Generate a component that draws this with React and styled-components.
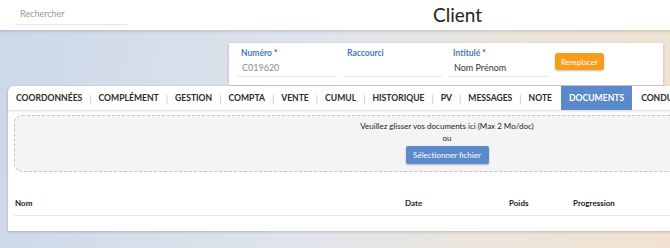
import React from 'react';
import styled, {createGlobalStyle} from 'styled-components';

const GlobalStyle = createGlobalStyle`
  html, body {
    margin: 0;
    padding: 0;
    overflow: hidden;
  }
  body {
    font-family: Lato, "Open Sans", sans-serif;
    background: linear-gradient(100deg, #cbd8e8 0%, #dfe4ec 45%, #ece5dc 75%, #f0e2cf 100%);
    min-height: 248px;
  }
`;

const tabs = ['Coordonnées', 'Complément', 'Gestion', 'Compta', 'Vente', 'Cumul', 'Historique', 'PV', 'Messages', 'Note', 'Documents', 'Conducteurs'];

const App = () => {
  return (
    <Page>
      <GlobalStyle />
      <TopBar>
        <Search placeholder="Rechercher" />
        <Title>Client</Title>
      </TopBar>

      <IdentityRow>
        <IdentityCard>
          <Field>
            <Label>Numéro <Star>*</Star></Label>
            <Value $muted>C019620</Value>
          </Field>
          <Field>
            <Label>Raccourci</Label>
            <Value></Value>
          </Field>
          <Field>
            <Label>Intitulé <Star>*</Star></Label>
            <Value>Nom Prénom</Value>
          </Field>
          <OrangeButton>Remplacer</OrangeButton>
        </IdentityCard>
      </IdentityRow>

      <Panel>
        <TabBar>
          {tabs.map((t, i) => (
            <React.Fragment key={t}>
              {/* no separator around the active tab */}
              {i > 0 && t !== 'Documents' && tabs[i - 1] !== 'Documents' && <Sep>|</Sep>}
              <Tab $active={t === 'Documents'}>{t}</Tab>
            </React.Fragment>
          ))}
        </TabBar>
        <Content>
          <DropZone>
            <DropText>Veuillez glisser vos documents ici (Max 2 Mo/doc)</DropText>
            <DropText>ou</DropText>
            <BlueButton>Sélectionner fichier</BlueButton>
          </DropZone>
          <TableHead>
            <Col $w="390px">Nom</Col>
            <Col $w="104px">Date</Col>
            <Col $w="64px">Poids</Col>
            <Col>Progression</Col>
          </TableHead>
        </Content>
      </Panel>
    </Page>
  );
};

const Page = styled.div`
  width: 910px;
  display: flex;
  flex-direction: column;
`;

const TopBar = styled.div`
  height: 30px;
  background: #fff;
  box-shadow: 0 1px 3px rgba(0, 0, 0, 0.18);
  display: flex;
  align-items: center;
  padding-left: 15px;
`;

const Search = styled.input`
  width: 107px;
  border: none;
  border-bottom: 1px solid #e6e6e6;
  font-family: inherit;
  font-size: 9px;
  padding: 0 0 5px 5px;
  margin-top: 3px;
  outline: none;
  &::placeholder {
    color: #9a9a9a;
  }
`;

const Title = styled.div`
  flex: 1;
  text-align: center;
  font-size: 19px;
  color: #222;
  padding-right: 122px;
  margin-top: -2px;
`;

const IdentityRow = styled.div`
  display: flex;
  padding: 13px 0 0 229px;
`;

const IdentityCard = styled.div`
  background: #fff;
  width: 434px;
  height: 42px;
  box-shadow: 0 1px 3px rgba(0, 0, 0, 0.2);
  display: flex;
  align-items: flex-start;
  gap: 7px;
  padding-left: 8px;
  box-sizing: border-box;
`;

const Field = styled.div`
  width: 99px;
  display: flex;
  flex-direction: column;
  padding-top: 5px;
`;

const Label = styled.div`
  font-size: 8.5px;
  font-weight: 700;
  color: #4a78bb;
  padding-left: 4px;
  height: 11px;
`;

const Star = styled.span`
  color: #e02020;
`;

const Value = styled.div`
  font-size: 9px;
  color: ${p => (p.$muted ? '#8a8a8a' : '#333')};
  padding: 3px 0 3px 5px;
  height: 11px;
  border-bottom: 1px solid #e6e6e6;
`;

const OrangeButton = styled.button`
  margin-top: 10px;
  background: #f89c1c;
  color: #fff;
  border: none;
  border-radius: 3px;
  font-family: inherit;
  font-size: 8px;
  width: 49px;
  height: 17px;
  padding: 0;
  box-shadow: 0 1px 2px rgba(0, 0, 0, 0.25);
`;

const Panel = styled.div`
  margin: 1px 0 0 8px;
  width: 878px;
  display: flex;
  flex-direction: column;
  box-shadow: 0 1px 3px rgba(0, 0, 0, 0.2);
  border-radius: 6px 6px 0 0;
  background: #fff;
`;

const TabBar = styled.div`
  height: 24px;
  display: flex;
  align-items: stretch;
  padding-left: 8px;
  border-bottom: 1px solid #e4e4e4;
  box-shadow: 0 1px 2px rgba(0, 0, 0, 0.08);
`;

const Tab = styled.div`
  display: flex;
  align-items: center;
  padding: 0 ${p => (p.$active ? '8px' : '0')};
  margin: ${p => (p.$active ? '0 0 0 1px' : '0')};
  font-size: 8.6px;
  font-weight: 700;
  text-transform: uppercase;
  color: ${p => (p.$active ? '#fff' : '#2b2b2b')};
  background: ${p => (p.$active ? '#5a8acb' : 'transparent')};
  & + & {
    margin-left: 9px;
  }
`;

const Sep = styled.div`
  display: flex;
  align-items: center;
  padding: 0 7px;
  font-size: 9px;
  color: #b8b8b8;
`;

const Content = styled.div`
  padding: 4px 6px 15px 6px;
  display: flex;
  flex-direction: column;
`;

const DropZone = styled.div`
  background: #f4f4f4;
  border: 1px dashed #c4c4c4;
  border-radius: 8px;
  height: 57px;
  display: flex;
  flex-direction: column;
  align-items: center;
  padding-top: 4px;
  box-sizing: border-box;
`;

const DropText = styled.div`
  font-size: 8px;
  color: #222;
  line-height: 12px;
`;

const BlueButton = styled.button`
  margin-top: 2px;
  background: #5a8acb;
  color: #fff;
  border: none;
  border-radius: 2px;
  font-family: inherit;
  font-size: 8px;
  width: 83px;
  height: 18px;
  padding: 0;
  box-shadow: 0 1px 2px rgba(0, 0, 0, 0.25);
`;

const TableHead = styled.div`
  display: flex;
  margin-top: 26px;
  padding: 0 1px 7px 1px;
  border-bottom: 1px solid #e8e8e8;
`;

const Col = styled.div`
  width: ${p => p.$w || 'auto'};
  font-size: 8px;
  font-weight: 700;
  color: #222;
`;

export default App;
